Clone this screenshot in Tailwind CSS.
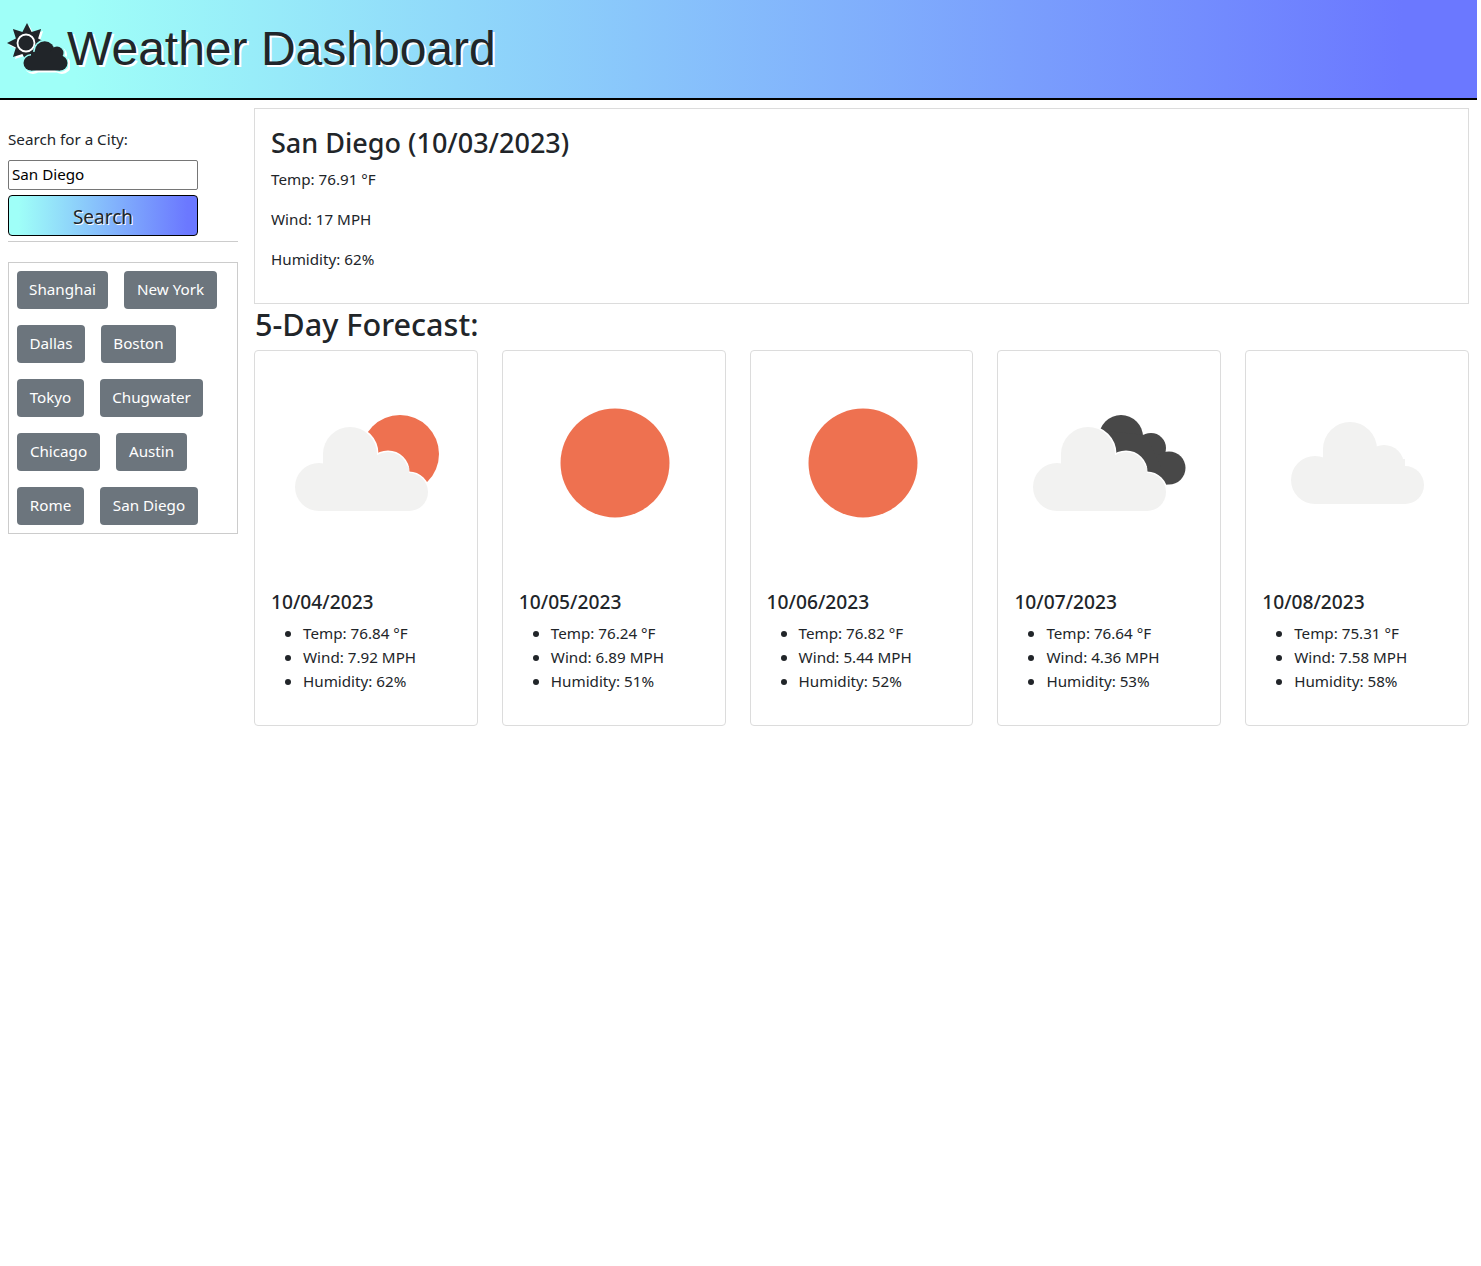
<!DOCTYPE html>
<html><head><meta charset="utf-8"><title>Weather Dashboard</title>
<script src="https://cdn.jsdelivr.net/npm/@tailwindcss/browser@4"></script></head>
<body class="bg-white text-[#212529] font-['Noto_Sans',sans-serif] text-[15.2px] leading-[24px]">
<div class="w-[1477px]">
<header class="h-[100px] border-b-2 border-black bg-[linear-gradient(to_right,#9ffff8_0%,#9ffff8_5%,#6b78ff_95%)] flex items-start pl-[7px]">
<svg class="w-[61px] h-[51px] shrink-0 mt-[22px] drop-shadow-[2px_2px_0_#fff]" viewBox="0 0 61 51"><path fill="#212529" transform="translate(-1 0)" d="M21 1L25.6 9.9L35.1 6.9L32.1 16.4L41 21L32.1 25.6L35.1 35.1L25.6 32.1L21 41L16.4 32.1L6.9 35.1L9.9 25.6L1 21L9.9 16.4L6.9 6.9L16.4 9.9z"/><circle cx="19" cy="21" r="8.5" fill="none" stroke="#fff" stroke-width="1.8"/><g fill="#9ffff8" stroke="#9ffff8" stroke-width="3"><circle cx="24" cy="41" r="7.5"/><circle cx="37.7" cy="29.3" r="10"/><circle cx="50" cy="31" r="6.5"/><circle cx="53" cy="41" r="7.5"/></g><g fill="#212529"><circle cx="24" cy="41" r="7.5"/><circle cx="37.7" cy="29.3" r="10"/><circle cx="50" cy="31" r="6.5"/><circle cx="53" cy="41" r="7.5"/><rect x="24" y="30" width="29" height="18.5"/></g></svg>
<h1 class="font-['Liberation_Sans',sans-serif] text-[48px] leading-[58px] mt-[20px] -ml-[1px] [text-shadow:2px_2px_0_#fff]">Weather Dashboard</h1>
</header>
<div class="flex gap-4 p-2">
<aside class="w-[230px] shrink-0">
<div class="pt-[19px]">
<label class="block mb-[9px] leading-[24px]">Search for a City:</label>
<input value="San Diego" class="block w-[190px] h-[30px] border border-[#767676] rounded-[2px] px-[3px] pb-[2px] text-[15.2px] text-black font-['Noto_Sans',sans-serif]">
<button class="block mt-[5px] w-[190px] h-[41px] pt-[2px] border border-black rounded-[4px] text-[19px] font-['Noto_Sans',sans-serif] bg-[linear-gradient(to_right,#9ffff8_5%,#6b78ff_95%)] [text-shadow:1px_1px_0_#fff]">Search</button>
</div>
<hr class="mt-[5px] mb-[20px] border-[#ccc]">
<div class="border border-[#ccc] p-2 flex flex-col gap-4">
<div class="flex gap-4"><button class="h-[38px] w-[91px] pb-[2px] rounded bg-[#6c757d] text-white">Shanghai</button><button class="h-[38px] w-[93px] pb-[2px] rounded bg-[#6c757d] text-white">New York</button></div>
<div class="flex gap-4"><button class="h-[38px] w-[68px] pb-[2px] rounded bg-[#6c757d] text-white">Dallas</button><button class="h-[38px] w-[75px] pb-[2px] rounded bg-[#6c757d] text-white">Boston</button></div>
<div class="flex gap-4"><button class="h-[38px] w-[67px] pb-[2px] rounded bg-[#6c757d] text-white">Tokyo</button><button class="h-[38px] w-[103px] pb-[2px] rounded bg-[#6c757d] text-white">Chugwater</button></div>
<div class="flex gap-4"><button class="h-[38px] w-[83px] pb-[2px] rounded bg-[#6c757d] text-white">Chicago</button><button class="h-[38px] w-[71px] pb-[2px] rounded bg-[#6c757d] text-white">Austin</button></div>
<div class="flex gap-4"><button class="h-[38px] w-[67px] pb-[2px] rounded bg-[#6c757d] text-white">Rome</button><button class="h-[38px] w-[98px] pb-[2px] rounded bg-[#6c757d] text-white">San Diego</button></div>
</div>
</aside>
<main class="flex-1 min-w-0">
<section class="h-[196px] border border-[#dcdcdc] px-4 pt-[17px]">
<h2 class="text-[27px] leading-[34px] font-medium mb-[7px]">San Diego (10/03/2023)</h2>
<p class="mb-4">Temp: 76.91 °F</p><p class="mb-4">Wind: 17 MPH</p><p>Humidity: 62%</p>
</section>
<h2 class="text-[30.6px] leading-[38px] font-medium mt-[1px] mb-[7px] pl-[1px]">5-Day Forecast:</h2>
<div class="flex justify-between">
<article class="w-[223.8px] h-[376px] border border-[#dcdcdc] rounded">
<svg class="w-[222px] h-[222px] blur-[0.4px]" viewBox="0 0 222 222"><circle cx="145" cy="103" r="39" fill="#ee7150"/><g fill="#fff" stroke="#fff" stroke-width="3"><circle cx="64" cy="136" r="24"/><circle cx="95" cy="103" r="27"/><circle cx="133" cy="121" r="20"/><circle cx="154" cy="141" r="19"/></g><g fill="#f2f2f1"><circle cx="64" cy="136" r="24"/><circle cx="95" cy="103" r="27"/><circle cx="133" cy="121" r="20"/><circle cx="154" cy="141" r="19"/><rect x="64" y="115" width="90" height="45"/><rect x="68" y="103" width="54" height="22"/></g></svg>
<div class="px-4 mt-[17px]"><h3 class="text-[19.2px] leading-[24px] font-medium mb-[7px]">10/04/2023</h3><ul class="list-disc pl-8 marker:text-[16px]"><li class="h-[24px]">Temp: 76.84 °F</li><li class="h-[24px]">Wind: 7.92 MPH</li><li class="h-[24px]">Humidity: 62%</li></ul></div>
</article>
<article class="w-[223.8px] h-[376px] border border-[#dcdcdc] rounded">
<svg class="w-[222px] h-[222px] blur-[0.4px]" viewBox="0 0 222 222"><circle cx="112" cy="112" r="54.5" fill="#ee7150"/></svg>
<div class="px-4 mt-[17px]"><h3 class="text-[19.2px] leading-[24px] font-medium mb-[7px]">10/05/2023</h3><ul class="list-disc pl-8 marker:text-[16px]"><li class="h-[24px]">Temp: 76.24 °F</li><li class="h-[24px]">Wind: 6.89 MPH</li><li class="h-[24px]">Humidity: 51%</li></ul></div>
</article>
<article class="w-[223.8px] h-[376px] border border-[#dcdcdc] rounded">
<svg class="w-[222px] h-[222px] blur-[0.4px]" viewBox="0 0 222 222"><circle cx="112" cy="112" r="54.5" fill="#ee7150"/></svg>
<div class="px-4 mt-[17px]"><h3 class="text-[19.2px] leading-[24px] font-medium mb-[7px]">10/06/2023</h3><ul class="list-disc pl-8 marker:text-[16px]"><li class="h-[24px]">Temp: 76.82 °F</li><li class="h-[24px]">Wind: 5.44 MPH</li><li class="h-[24px]">Humidity: 52%</li></ul></div>
</article>
<article class="w-[223.8px] h-[376px] border border-[#dcdcdc] rounded">
<svg class="w-[222px] h-[222px] blur-[0.4px]" viewBox="0 0 222 222"><g fill="#484848" transform="translate(-2 0)"><circle cx="125" cy="86" r="22"/><circle cx="155" cy="97" r="15"/><circle cx="173" cy="117" r="16.5"/><path d="M110 80L150 84L173 133L140 140L110 120z"/></g><g transform="translate(-5 0)"><g fill="#fff" stroke="#fff" stroke-width="3"><circle cx="64" cy="136" r="24"/><circle cx="95" cy="103" r="27"/><circle cx="133" cy="121" r="20"/><circle cx="154" cy="141" r="19"/></g><g fill="#f2f2f1"><circle cx="64" cy="136" r="24"/><circle cx="95" cy="103" r="27"/><circle cx="133" cy="121" r="20"/><circle cx="154" cy="141" r="19"/><rect x="64" y="115" width="90" height="45"/><rect x="68" y="103" width="54" height="22"/></g></g></svg>
<div class="px-4 mt-[17px]"><h3 class="text-[19.2px] leading-[24px] font-medium mb-[7px]">10/07/2023</h3><ul class="list-disc pl-8 marker:text-[16px]"><li class="h-[24px]">Temp: 76.64 °F</li><li class="h-[24px]">Wind: 4.36 MPH</li><li class="h-[24px]">Humidity: 53%</li></ul></div>
</article>
<article class="w-[223.8px] h-[376px] border border-[#dcdcdc] rounded">
<svg class="w-[222px] h-[222px] blur-[0.4px]" viewBox="0 0 222 222"><g fill="#f2f2f1" transform="translate(5 -7)"><circle cx="64" cy="136" r="24"/><circle cx="99" cy="105" r="27"/><circle cx="133" cy="121" r="20"/><circle cx="154" cy="141" r="19"/><rect x="64" y="115" width="90" height="45"/><rect x="72" y="105" width="54" height="22"/></g></svg>
<div class="px-4 mt-[17px]"><h3 class="text-[19.2px] leading-[24px] font-medium mb-[7px]">10/08/2023</h3><ul class="list-disc pl-8 marker:text-[16px]"><li class="h-[24px]">Temp: 75.31 °F</li><li class="h-[24px]">Wind: 7.58 MPH</li><li class="h-[24px]">Humidity: 58%</li></ul></div>
</article>
</div>
</main>
</div>
</div>
</body></html>
